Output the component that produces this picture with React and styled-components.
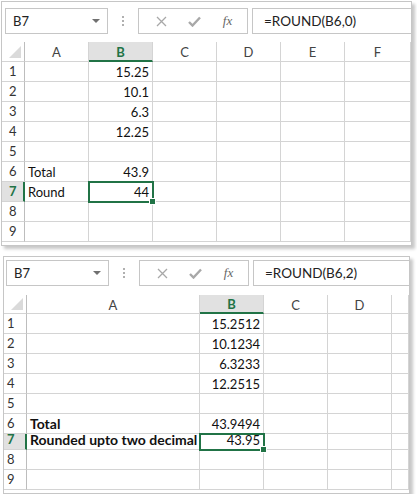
import styled, { createGlobalStyle } from 'styled-components';

const GlobalStyle = createGlobalStyle`
    body {
        margin: 0;
        background: #fff;
        font-family: Lato, "Liberation Sans", sans-serif;
    }
`;

const GREEN = '#217346';
const GRID = '#d4d4d4';

const Page = styled.div`
    display: flex;
    flex-direction: column;
    gap: 10px;
    padding: 1px 0 0 1px;
`;

const Panel = styled.div`
    width: ${(p) => p.$width}px;
    margin-left: ${(p) => p.$indent || 0}px;
    border: 1px solid #c6c6c6;
    background: #fff;
    box-shadow: 3px 3px 3px rgba(0, 0, 0, 0.22);
    padding-bottom: 3px;
`;

const Toolbar = styled.div`
    display: flex;
    align-items: center;
    height: 26px;
    margin: ${(p) => p.$top}px 0 ${(p) => p.$bottom}px ${(p) => p.$left}px;
`;

const NameBox = styled.div`
    box-sizing: border-box;
    width: 103px;
    height: 26px;
    border: 1px solid #c6c6c6;
    display: flex;
    align-items: center;
    justify-content: space-between;
    padding: 0 7px 0 7px;
    font-size: 13px;
    color: #222;
`;

const Arrow = styled.span`
    width: 0;
    height: 0;
    border-left: 4px solid transparent;
    border-right: 4px solid transparent;
    border-top: 4px solid #707070;
`;

const Dots = styled.div`
    width: 30px;
    display: flex;
    flex-direction: column;
    align-items: center;
    gap: 2px;

    span {
        width: 2px;
        height: 2px;
        background: #b0b0b0;
    }
`;

const ActionBox = styled.div`
    box-sizing: border-box;
    width: 110px;
    height: 26px;
    border: 1px solid #c6c6c6;
    display: flex;
    align-items: center;
    justify-content: space-around;
    padding: 0 4px 0 6px;
`;

const Fx = styled.span`
    font-family: "Liberation Serif", serif;
    font-style: italic;
    font-size: 13px;
    color: #666;
`;

const FormulaBox = styled.div`
    box-sizing: border-box;
    flex: 1;
    height: 26px;
    margin-left: 4px;
    border: 1px solid #c6c6c6;
    border-right: none;
    display: flex;
    align-items: center;
    padding-left: 11px;
    font-size: 13.5px;
    color: #222;
`;

const Sheet = styled.div`
    display: grid;
    grid-template-columns: ${(p) => p.$cols};
    grid-template-rows: ${(p) => p.$rows};
    font-size: 13px;
    color: #111;
`;

const Corner = styled.div`
    border-right: 1px solid #bdbdbd;
    border-bottom: 1px solid ${GRID};
    position: relative;

    &::after {
        content: '';
        position: absolute;
        right: 3px;
        bottom: 3px;
        width: 0;
        height: 0;
        border-left: 12px solid transparent;
        border-bottom: 12px solid #dadada;
    }
`;

const ColHead = styled.div`
    box-sizing: border-box;
    display: flex;
    align-items: center;
    justify-content: center;
    border-right: 1px solid ${GRID};
    border-bottom: ${(p) => (p.$active ? `2px solid ${GREEN}` : `1px solid ${GRID}`)};
    background: ${(p) => (p.$active ? '#e1e1e1' : '#fff')};
    color: ${(p) => (p.$active ? GREEN : '#444')};
    font-weight: ${(p) => (p.$active ? 700 : 400)};
    padding-top: 1px;
`;

const RowHead = styled.div`
    box-sizing: border-box;
    display: flex;
    align-items: flex-end;
    padding: 0 0 2px ${(p) => p.$pad}px;
    border-right: ${(p) => (p.$active ? `2px solid ${GREEN}` : '1px solid #bdbdbd')};
    border-bottom: 1px solid ${GRID};
    background: ${(p) => (p.$active ? '#e1e1e1' : '#fff')};
    color: ${(p) => (p.$active ? GREEN : '#333')};
    font-weight: ${(p) => (p.$active ? 700 : 400)};
`;

const Cell = styled.div`
    box-sizing: border-box;
    position: relative;
    display: flex;
    align-items: flex-end;
    justify-content: ${(p) => (p.$right ? 'flex-end' : 'flex-start')};
    padding: 0 3px 1px 3px;
    border-right: 1px solid ${GRID};
    border-bottom: 1px solid ${GRID};
    font-weight: ${(p) => (p.$bold ? 700 : 400)};
    font-size: ${(p) => (p.$bold ? '14px' : 'inherit')};
    white-space: nowrap;
    overflow: visible;
    z-index: ${(p) => (p.$selected ? 2 : p.$spill ? 1 : 0)};
    background: ${(p) => (p.$spill ? '#fff' : 'transparent')};

    ${(p) =>
        p.$selected &&
        `
        outline: 2px solid ${GREEN};
        outline-offset: -1px;
        &::after {
            content: '';
            position: absolute;
            right: -4px;
            bottom: -4px;
            width: 5px;
            height: 5px;
            background: ${GREEN};
            border: 1px solid #fff;
        }
    `}
`;

function XIcon() {
    return (
        <svg width="11" height="11" viewBox="0 0 11 11">
            <path d="M1 1 L10 10 M10 1 L1 10" stroke="#a8a8a8" strokeWidth="1.3" />
        </svg>
    );
}

function CheckIcon() {
    return (
        <svg width="13" height="11" viewBox="0 0 13 11">
            <path d="M1 6 L4.5 9.5 L12 1.5" stroke="#a8a8a8" strokeWidth="2.4" fill="none" />
        </svg>
    );
}

function Bar({ formula, top, bottom, left }) {
    return (
        <Toolbar $top={top} $bottom={bottom} $left={left}>
            <NameBox>
                B7
                <Arrow />
            </NameBox>
            <Dots>
                <span />
                <span />
                <span />
            </Dots>
            <ActionBox>
                <XIcon />
                <CheckIcon />
                <Fx>fx</Fx>
            </ActionBox>
            <FormulaBox>{formula}</FormulaBox>
        </Toolbar>
    );
}

function Grid({ cols, widths, rows, heights, pad, boldLabels }) {
    return (
        <Sheet $cols={widths} $rows={heights}>
            <Corner />
            {cols.map((c) => (
                <ColHead key={c} $active={c === 'B'}>
                    {c}
                </ColHead>
            ))}
            {rows.map((r, i) => {
                const n = i + 1;
                return [
                    <RowHead key={'h' + n} $active={n === 7} $pad={pad}>
                        {n}
                    </RowHead>,
                    ...cols.map((c, j) => (
                        <Cell
                            key={c + n}
                            $right={c === 'B'}
                            $bold={boldLabels && c === 'A'}
                            $selected={c === 'B' && n === 7}
                            $spill={c === 'A' && r[0]}
                        >
                            {r[j] || ''}
                        </Cell>
                    )),
                ];
            })}
        </Sheet>
    );
}

const rows1 = [
    ['', '15.25'],
    ['', '10.1'],
    ['', '6.3'],
    ['', '12.25'],
    [],
    ['Total', '43.9'],
    ['Round', '44'],
    [],
    [],
];

const rows2 = [
    ['', '15.2512'],
    ['', '10.1234'],
    ['', '6.3233'],
    ['', '12.2515'],
    [],
    ['Total', '43.9494'],
    ['Rounded upto two decimal', '43.95'],
    [],
    [],
];

export default function App() {
    return (
        <>
            <GlobalStyle />
            <Page>
                <Panel $width={409}>
                    <Bar formula="=ROUND(B6,0)" top={6} bottom={8} left={3} />
                    <Grid
                        cols={['A', 'B', 'C', 'D', 'E', 'F']}
                        widths="23px repeat(5, 64px) 66px"
                        rows={rows1}
                        heights="20px repeat(9, 20px)"
                        pad={7}
                    />
                </Panel>
                <Panel $width={405} $indent={2}>
                    <Bar formula="=ROUND(B6,2)" top={3} bottom={9} left={2} />
                    <Grid
                        cols={['A', 'B', 'C', 'D', '']}
                        widths="23px 173px 64px 64px 64px 17px"
                        rows={rows2}
                        heights="19px repeat(6, 20px) 16px 20px 20px"
                        pad={3}
                        boldLabels
                    />
                </Panel>
            </Page>
        </>
    );
}
